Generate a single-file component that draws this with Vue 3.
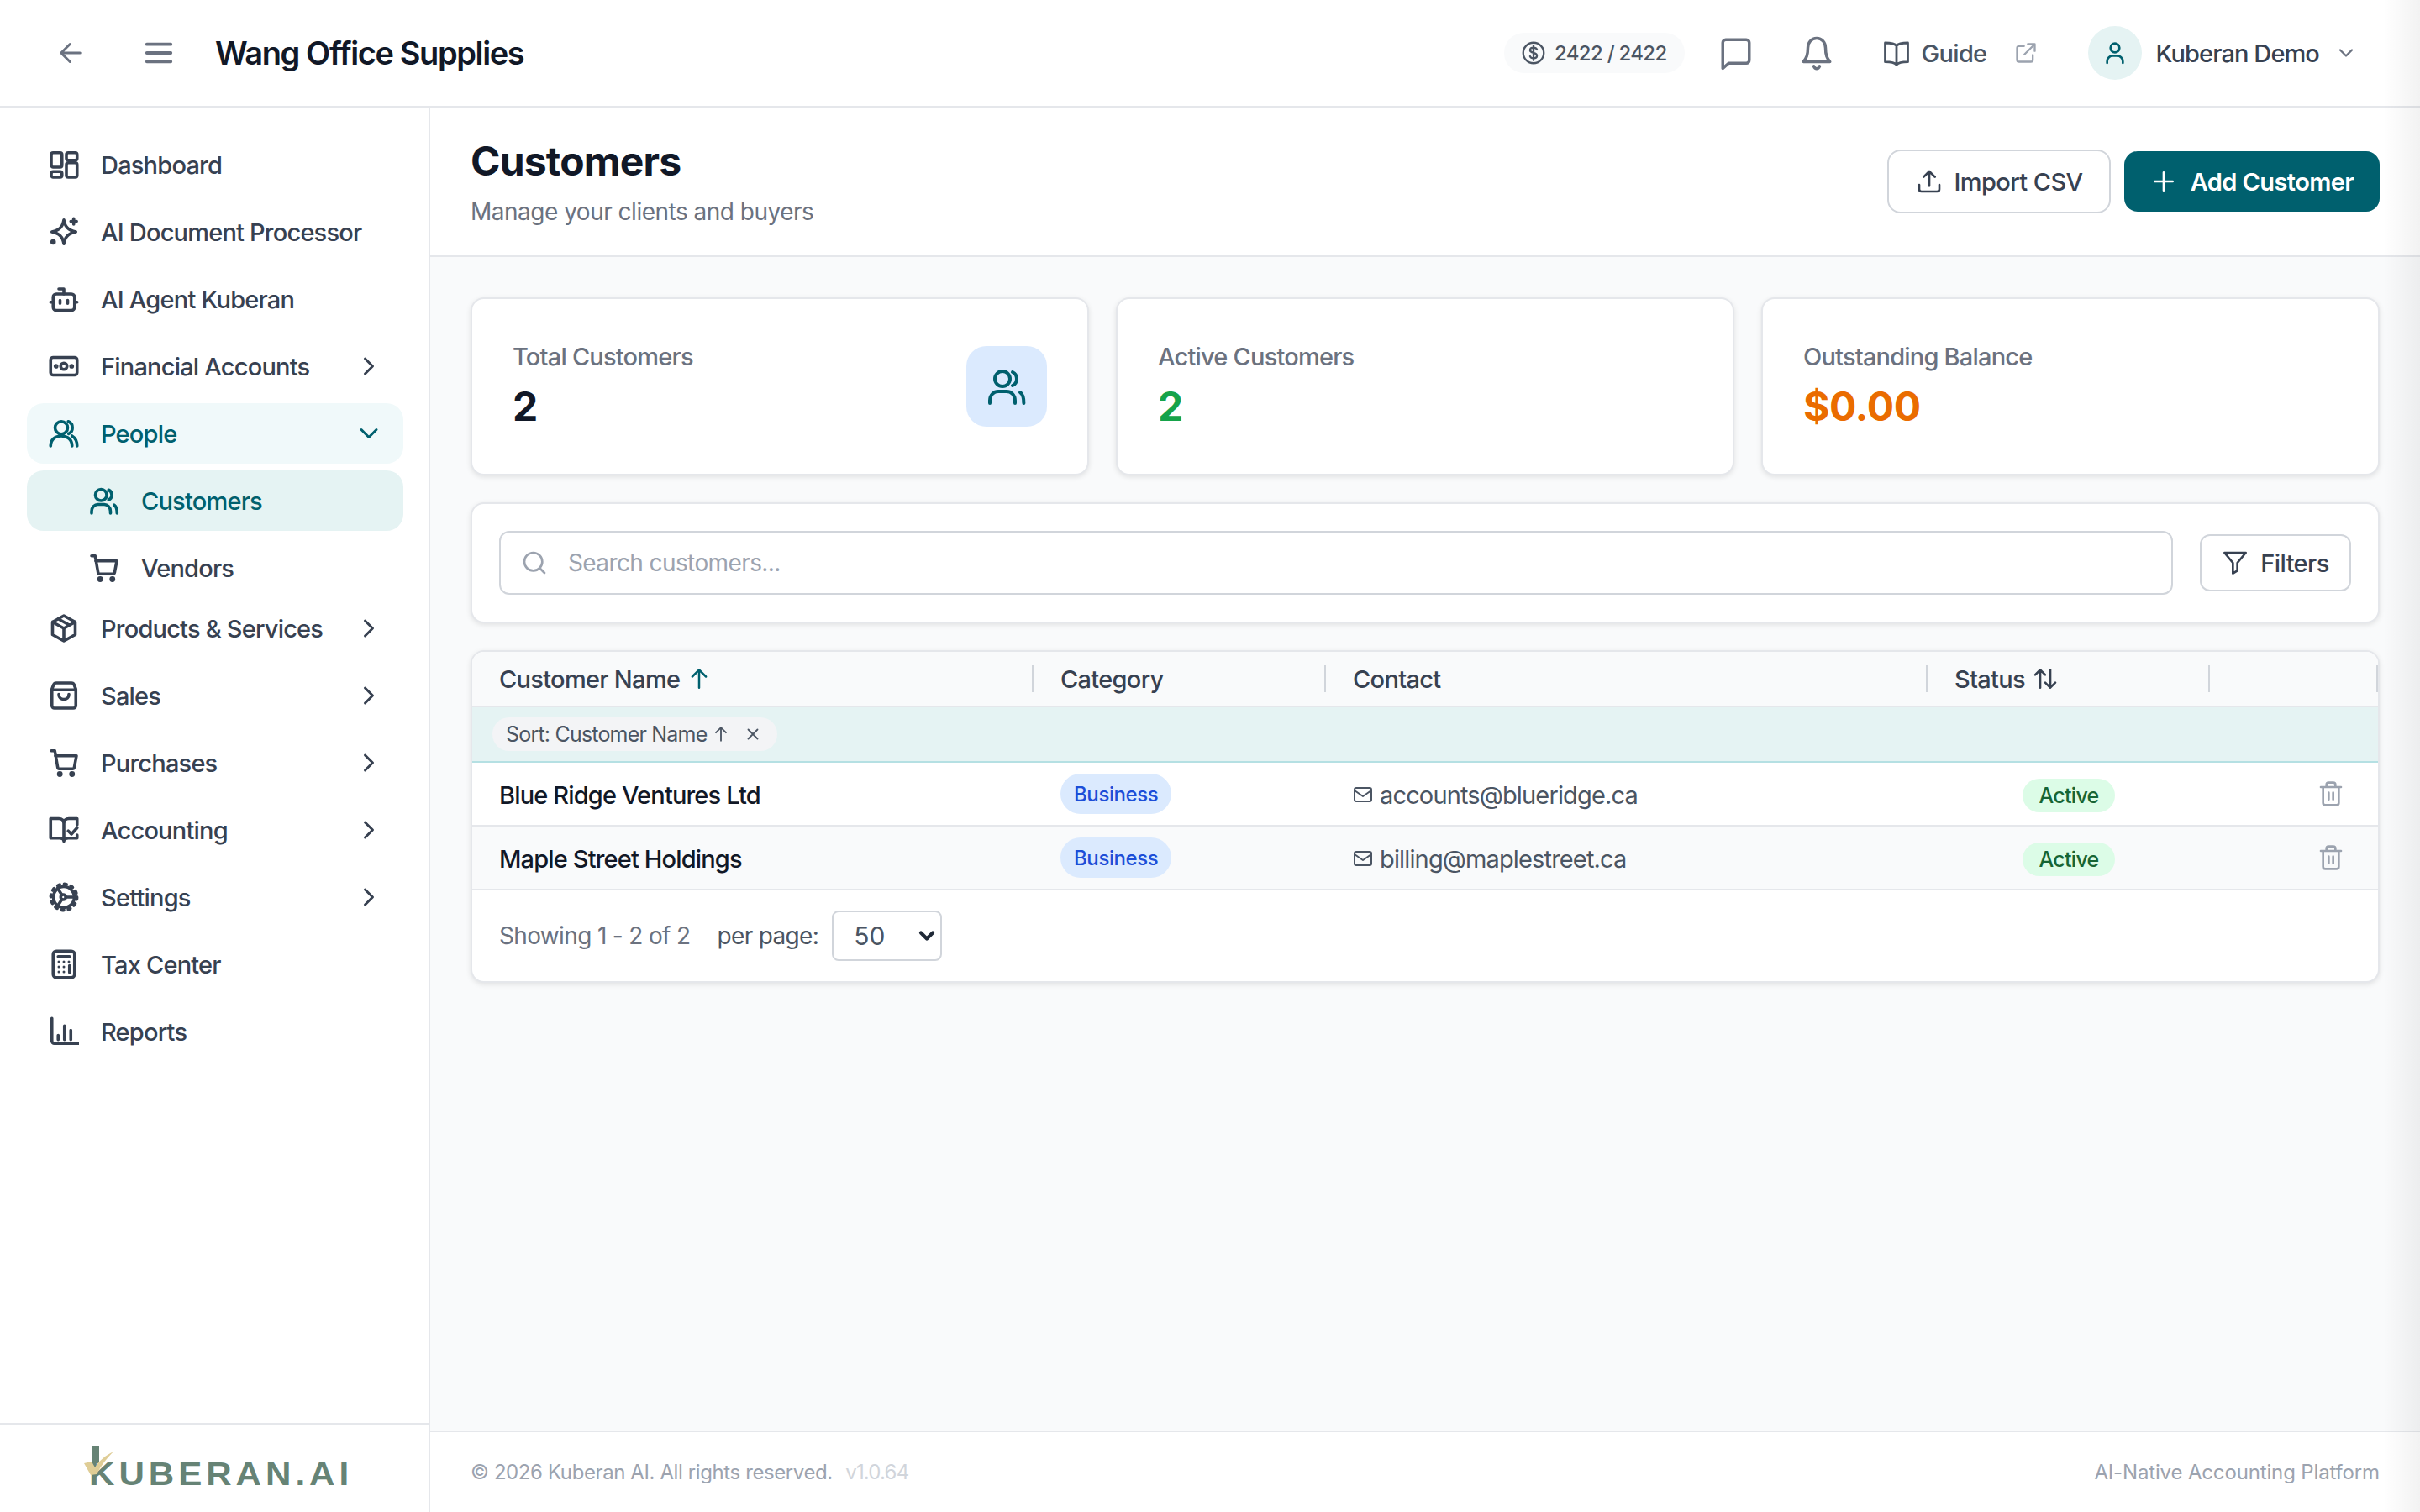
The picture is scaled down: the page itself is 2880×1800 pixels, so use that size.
<template>
  <div class="app">
    <!-- 顶栏 -->
    <header class="topbar">
      <svg class="ic back" viewBox="0 0 24 24" v-html="icons.back"></svg>
      <svg class="ic menu" viewBox="0 0 24 24" v-html="icons.menu"></svg>
      <div class="company">Wang Office Supplies</div>
      <div class="top-right">
        <div class="credits">
          <svg class="ic coin" viewBox="0 0 24 24" v-html="icons.coin"></svg>
          <span>2422 / 2422</span>
        </div>
        <svg class="ic chat" viewBox="0 0 24 24" v-html="icons.chat"></svg>
        <svg class="ic bell" viewBox="0 0 24 24" v-html="icons.bell"></svg>
        <svg class="ic guide-ic" viewBox="0 0 24 24" v-html="icons.book"></svg>
        <span class="guide">Guide</span>
        <svg class="ic ext" viewBox="0 0 24 24" v-html="icons.ext"></svg>
        <div class="avatar">
          <svg class="ic" viewBox="0 0 24 24" v-html="icons.user"></svg>
        </div>
        <span class="uname">Kuberan Demo</span>
        <svg class="ic uchev" viewBox="0 0 24 24" v-html="icons.down"></svg>
      </div>
    </header>

    <div class="body">
      <!-- 侧边栏 -->
      <aside class="sidebar">
        <nav class="nav">
          <div
            v-for="item in navItems"
            :key="item.label"
            class="nav-item"
            :class="[item.cls]"
          >
            <svg class="ic nav-ic" viewBox="0 0 24 24" v-html="icons[item.icon]"></svg>
            <span class="nav-label">{{ item.label }}</span>
            <svg v-if="item.arrow" class="ic nav-arrow" viewBox="0 0 24 24" v-html="icons[item.arrow]"></svg>
          </div>
        </nav>
        <div class="side-foot">
          <div class="logo">
            <span class="logo-text">KUBERAN.AI</span>
            <svg class="logo-mark" viewBox="0 0 40 40">
              <rect x="9" y="0" width="9" height="20" fill="#668375" />
              <path d="M0 20 L9 18 L13 25 C18 17 25 11 35 6 C27 14 20 23 15 33 L8 34 Z" fill="#dfcd96" />
            </svg>
          </div>
        </div>
      </aside>

      <main class="main">
        <section class="page-head">
          <div class="head-text">
            <h1>Customers</h1>
            <p>Manage your clients and buyers</p>
          </div>
          <div class="head-btns">
            <button class="btn btn-outline">
              <svg class="ic" viewBox="0 0 24 24" v-html="icons.upload"></svg>
              Import CSV
            </button>
            <button class="btn btn-primary">
              <svg class="ic" viewBox="0 0 24 24" v-html="icons.plus"></svg>
              Add Customer
            </button>
          </div>
        </section>

        <section class="content">
          <div class="stats">
            <div v-for="s in stats" :key="s.label" class="card stat">
              <div>
                <div class="stat-label">{{ s.label }}</div>
                <div class="stat-value" :class="s.cls">{{ s.value }}</div>
              </div>
              <div v-if="s.icon" class="stat-icon">
                <svg class="ic" viewBox="0 0 24 24" v-html="icons.customers"></svg>
              </div>
            </div>
          </div>

          <div class="card search-card">
            <div class="search">
              <svg class="ic" viewBox="0 0 24 24" v-html="icons.search"></svg>
              <span>Search customers...</span>
            </div>
            <button class="btn-filter">
              <svg class="ic" viewBox="0 0 24 24" v-html="icons.filter"></svg>
              Filters
            </button>
          </div>

          <div class="card table-card">
            <div class="t-row t-head">
              <div class="th">
                Customer Name
                <svg class="ic sort-on" viewBox="0 0 24 24" v-html="icons.up"></svg>
              </div>
              <div class="th">Category</div>
              <div class="th">Contact</div>
              <div class="th">
                Status
                <svg class="ic sort-off" viewBox="0 0 24 24" v-html="icons.updown"></svg>
              </div>
              <div class="th"></div>
            </div>
            <div class="sort-bar">
              <div class="chip">
                Sort: Customer Name
                <svg class="ic" viewBox="0 0 24 24" v-html="icons.up"></svg>
                <svg class="ic chip-x" viewBox="0 0 24 24" v-html="icons.close"></svg>
              </div>
            </div>
            <div v-for="c in customers" :key="c.name" class="t-row row">
              <div class="td name">{{ c.name }}</div>
              <div class="td"><span class="badge-cat">Business</span></div>
              <div class="td contact">
                <svg class="ic" viewBox="0 0 24 24" v-html="icons.mail"></svg>
                {{ c.email }}
              </div>
              <div class="td status"><span class="badge-ok">Active</span></div>
              <div class="td act">
                <svg class="ic" viewBox="0 0 24 24" v-html="icons.trash"></svg>
              </div>
            </div>
            <div class="pager">
              <span>Showing 1 - 2 of 2</span>
              <span class="per">per page:</span>
              <div class="select-wrap">
                <select class="per-select">
                  <option>50</option>
                  <option>100</option>
                </select>
                <svg class="ic select-arrow" viewBox="0 0 24 24" v-html="icons.down"></svg>
              </div>
            </div>
          </div>
        </section>

        <footer class="foot">
          <div>© 2026 Kuberan AI. All rights reserved. <span class="ver">v1.0.64</span></div>
          <div class="tagline">AI-Native Accounting Platform</div>
        </footer>
      </main>
    </div>
    <!-- 右侧抽屉的阴影 -->
    <div class="edge-shadow"></div>
  </div>
</template>

<script setup>
// 图标路径，24x24
const icons = {
  back: '<path d="M19.5 12H4.5M11.5 19l-7-7 7-7"/>',
  menu: '<path d="M3 5.5h18M3 12h18M3 18.5h18"/>',
  coin: '<circle cx="12" cy="12" r="10.5"/><path d="M15.5 8.5c-.5-1.2-1.8-2-3.5-2-2 0-3.5 1-3.5 2.7 0 3.6 7 1.9 7 5.6 0 1.7-1.5 2.7-3.5 2.7-1.7 0-3-.8-3.5-2M12 4.5v15"/>',
  chat: '<path d="M3 5c0-1.1.9-2 2-2h14c1.1 0 2 .9 2 2v12c0 1.1-.9 2-2 2H7l-4 3.5z"/>',
  bell: '<path d="M12 2c-3.600 0-6 3-6 6.500 0 5-1 7-3 9.500h18c-2-2.500-3-4.500-3-9.500C18 5 15.600 2 12 2zM10 21c.5 1.200 1.200 1.700 2 1.700s1.500-.5 2-1.700"/>',
  book: '<path d="M12 6C10.500 4 7 3.500 2.500 3.500v16c4.500 0 8 .5 9.500 2.500 1.500-2 5-2.500 9.500-2.500v-16C17 3.500 13.500 4 12 6zM12 6v16"/>',
  ext: '<path d="M19 14v5c0 1.100-.9 2-2 2H5c-1.100 0-2-.9-2-2V7c0-1.100.9-2 2-2h5M14 3h7v7M21 3 10.500 13.500"/>',
  user: '<circle cx="12" cy="7.500" r="4"/><path d="M5 21v-1.500c0-3 2.500-5 5-5h4c2.500 0 5 2 5 5V21"/>',
  down: '<path d="M6 9l6 6 6-6"/>',
  right: '<path d="M9 6l6 6-6 6"/>',
  up: '<path d="M12 20.500V3.500M5.500 10 12 3.500 18.500 10"/>',
  updown: '<path d="M7.500 20V4M3 8.500 7.500 4 12 8.500M16.500 4v16M12 15.500 16.500 20l4.500-4.500"/>',
  close: '<path d="M6 6l12 12M18 6 6 18"/>',
  plus: '<path d="M12 4v16M4 12h16"/>',
  upload: '<path d="M3 15v4c0 1.100.9 2 2 2h14c1.100 0 2-.9 2-2v-4M12 16V3M7 8l5-5 5 5"/>',
  search: '<circle cx="11" cy="11" r="8"/><path d="M21 21l-4.300-4.300"/>',
  filter: '<path d="M2.500 3h19l-7.500 9v7l-4 2.500V12z"/>',
  mail: '<rect x="2" y="4" width="20" height="16" rx="2"/><path d="M2 7l10 7 10-7"/>',
  trash: '<path d="M3 6h18M19 6v14c0 1.100-.9 2-2 2H7c-1.100 0-2-.9-2-2V6M8 6V4c0-1.100.9-2 2-2h4c1.100 0 2 .9 2 2v2M10 11v6M14 11v6"/>',
  dashboard: '<rect x="2" y="2.500" width="8.500" height="11.500" rx="1.500"/><rect x="14" y="2.500" width="8.500" height="6" rx="1.500"/><rect x="2" y="17.500" width="8.500" height="4.500" rx="1.500"/><rect x="14" y="10.500" width="8.500" height="11.500" rx="1.500"/>',
  sparkle: '<path d="M12 2.500c.9 5.500 3.400 8.300 9.500 9.500-6.100 1.200-8.600 4-9.500 9.500-.9-5.500-3.400-8.300-9.500-9.500 6.100-1.200 8.600-4 9.500-9.500z"/><path d="M19.800 1.500v4.500M17.500 3.700h4.600"/><circle cx="3.500" cy="20" r="1" fill="currentColor"/>',
  bot: '<rect x="3.500" y="8" width="17" height="13" rx="2.500"/><path d="M12 8V4H8M9 13v2.500M15 13v2.500M1.500 14.500h2M20.500 14.500h2"/>',
  money: '<rect x="1.500" y="5" width="21" height="14" rx="2"/><circle cx="12" cy="12" r="2.500"/><circle cx="5.800" cy="12" r=".7" fill="currentColor"/><circle cx="18.200" cy="12" r=".7" fill="currentColor"/>',
  people: '<circle cx="10" cy="7.500" r="5"/><path d="M1.500 22c0-5 3.500-8 8.500-8s8.500 3 8.500 8M15.500 2.500c2 .8 3.300 2.700 3.300 5s-1.300 4-3 4.700M18.500 14c2.500 1.500 4 4.500 4 8"/>',
  customers: '<circle cx="9.500" cy="7.500" r="4.500"/><path d="M15.500 3.500c1.500.7 2.500 2.300 2.500 4s-1 3.300-2.500 4M2 22v-1.500C2 17 4.500 15 7 15h5c2.500 0 5 2 5 5.500V22M20 15.500c1.500 1 2.200 3 2.200 6.500"/>',
  cart: '<path d="M2 2.500h2.800L7.200 16c.1.500.5.800 1 .8h11c.5 0 .9-.3 1-.8L22 6.500H5.200"/><circle cx="8.800" cy="21" r="1.100" fill="currentColor"/><circle cx="18.500" cy="21" r="1.100" fill="currentColor"/>',
  box: '<path d="M12 2l9 5v10l-9 5-9-5V7zM3 7l9 5 9-5M12 12v10M7.500 4.500l9 5"/>',
  bag: '<path d="M6 2h12c1 0 1.800.5 2.200 1.500L21.500 7v13c0 1.100-.9 2-2 2h-15c-1.100 0-2-.9-2-2V7l1.300-3.500C4.200 2.500 5 2 6 2zM2.500 7.500h19M8 11c0 2.500 1.800 4 4 4s4-1.500 4-4"/>',
  ledger: '<path d="M12 21c0-1.500-1.500-2.500-3.500-2.500H1.500V3H8c2.500 0 4 1.500 4 4v14zM12 7c0-2.500 1.500-4 4-4h6.500v5M12 21c0-1.500 1.500-2.500 3.500-2.500h7V16M15.500 12.800l2.500 2.500 4.500-5"/>',
  gear: '<circle cx="12" cy="12" r="8.300"/><circle cx="12" cy="12" r="10.300" stroke-dasharray="1.700 3.700" stroke-width="2.600"/><circle cx="11.500" cy="12" r="2"/><path d="M13.500 12h7M10.500 10.300 7 4.800M10.500 13.700 7 19.200"/>',
  calc: '<rect x="3.500" y="1.500" width="17" height="21" rx="2.500"/><path d="M7.500 5.800h9M16.500 13v5.500"/><g fill="currentColor" stroke="none"><circle cx="8" cy="10" r="1"/><circle cx="12" cy="10" r="1"/><circle cx="16" cy="10" r="1"/><circle cx="8" cy="14" r="1"/><circle cx="12" cy="14" r="1"/><circle cx="8" cy="18" r="1"/><circle cx="12" cy="18" r="1"/></g>',
  chart: '<path d="M2.500 1.500v18c0 1.100.9 2 2 2h19M7.500 15v3.500M12.500 7.500v11M17.500 11v7.500"/>'
}

// 侧边栏菜单
const navItems = [
  { label: 'Dashboard', icon: 'dashboard' },
  { label: 'AI Document Processor', icon: 'sparkle' },
  { label: 'AI Agent Kuberan', icon: 'bot' },
  { label: 'Financial Accounts', icon: 'money', arrow: 'right' },
  { label: 'People', icon: 'people', arrow: 'down', cls: 'open' },
  { label: 'Customers', icon: 'customers', cls: 'sub active' },
  { label: 'Vendors', icon: 'cart', cls: 'sub' },
  { label: 'Products & Services', icon: 'box', arrow: 'right', cls: 'after-sub' },
  { label: 'Sales', icon: 'bag', arrow: 'right' },
  { label: 'Purchases', icon: 'cart', arrow: 'right' },
  { label: 'Accounting', icon: 'ledger', arrow: 'right' },
  { label: 'Settings', icon: 'gear', arrow: 'right' },
  { label: 'Tax Center', icon: 'calc' },
  { label: 'Reports', icon: 'chart' }
]

const stats = [
  { label: 'Total Customers', value: '2', icon: true },
  { label: 'Active Customers', value: '2', cls: 'green' },
  { label: 'Outstanding Balance', value: '$0.00', cls: 'orange' }
]

const customers = [
  { name: 'Blue Ridge Ventures Ltd', email: 'accounts@blueridge.ca' },
  { name: 'Maple Street Holdings', email: 'billing@maplestreet.ca' }
]
</script>

<style>
html,
body {
  margin: 0;
  background: #fff;
  overflow: hidden;
}
</style>

<style scoped>
.app {
  position: relative;
  width: 2880px;
  height: 1800px;
  display: flex;
  flex-direction: column;
  font-family: Inter, "Liberation Sans", sans-serif;
  color: #374151;
  overflow: hidden;
  letter-spacing: -0.7px;
}

.ic {
  fill: none;
  stroke: currentColor;
  stroke-width: 2;
  stroke-linecap: round;
  stroke-linejoin: round;
  flex: none;
}

/* 顶栏 */
.topbar {
  height: 126px;
  flex: none;
  border-bottom: 2px solid #e5e7eb;
  display: flex;
  align-items: center;
  padding: 0 74px 0 66px;
  background: #fff;
}

.back,
.menu {
  width: 36px;
  height: 36px;
  color: #6b7280;
}

.menu {
  margin-left: 68px;
  width: 38px;
  height: 38px;
  stroke-width: 2.4;
}

.company {
  margin-left: 48px;
  font-size: 38px;
  font-weight: 600;
  color: #111827;
  letter-spacing: -1.4px;
}

.top-right {
  margin-left: auto;
  display: flex;
  align-items: center;
}

.credits {
  display: flex;
  align-items: center;
  gap: 11px;
  height: 48px;
  padding: 0 21px;
  border-radius: 24px;
  background: #f9fafb;
  font-size: 24px;
  font-weight: 500;
  color: #4b5563;
}

.coin {
  width: 28px;
  height: 28px;
}

.chat,
.bell {
  width: 42px;
  height: 42px;
  color: #6b7280;
}

.chat {
  margin-left: 40px;
}

.bell {
  margin-left: 54px;
}

.guide-ic {
  width: 34px;
  height: 34px;
  margin-left: 57px;
  color: #4b5563;
}

.guide {
  margin-left: 13px;
  font-size: 29px;
  font-weight: 500;
  color: #4b5563;
}

.ext {
  width: 28px;
  height: 28px;
  margin-left: 33px;
  color: #9ca3af;
}

.avatar {
  width: 64px;
  height: 64px;
  margin-left: 60px;
  border-radius: 50%;
  background: #e5f3f3;
  color: #00606e;
  display: flex;
  align-items: center;
  justify-content: center;
}

.avatar .ic {
  width: 32px;
  height: 32px;
}

.uname {
  margin-left: 16px;
  font-size: 29px;
  font-weight: 500;
  color: #374151;
  letter-spacing: -0.9px;
}

.uchev {
  width: 28px;
  height: 28px;
  margin-left: 18px;
  color: #6b7280;
}

.body {
  flex: 1;
  display: flex;
  min-height: 0;
}

/* 侧边栏 */
.sidebar {
  width: 510px;
  flex: none;
  border-right: 2px solid #e5e7eb;
  display: flex;
  flex-direction: column;
  background: #fff;
}

.nav {
  flex: 1;
  padding: 32px 30px 0 32px;
}

.nav-item {
  height: 72px;
  margin-bottom: 8px;
  padding: 0 23px 0 26px;
  border-radius: 20px;
  display: flex;
  align-items: center;
  font-size: 29px;
  font-weight: 500;
  color: #374151;
  letter-spacing: -0.8px;
}

.nav-ic {
  width: 36px;
  height: 36px;
  stroke-width: 2.4;
}

.nav-label {
  margin-left: 26px;
}

.nav-arrow {
  width: 36px;
  height: 36px;
  margin-left: auto;
}

.nav-item.open {
  background: #f0f9fa;
  color: #00606e;
}

.nav-item.sub {
  padding-left: 74px;
}

.nav-item.active {
  background: #e5f3f3;
  color: #00606e;
}

.nav-item.after-sub {
  margin-top: -8px;
}

.side-foot {
  height: 104px;
  flex: none;
  border-top: 2px solid #e5e7eb;
  display: flex;
  align-items: center;
  padding-left: 106px;
}

.logo {
  position: relative;
  margin-top: 12px;
}

.logo-text {
  display: block;
  font-family: "Liberation Sans", sans-serif;
  font-size: 39px;
  line-height: 1;
  font-weight: 700;
  color: #668375;
  letter-spacing: 4.6px;
  transform: scaleX(1.08);
  transform-origin: left center;
}

.logo-mark {
  position: absolute;
  left: -6px;
  top: -13px;
  width: 40px;
  height: 40px;
}

/* 主内容 */
.main {
  flex: 1;
  min-width: 0;
  display: flex;
  flex-direction: column;
  background: #f9fafb;
}

.page-head {
  height: 176px;
  flex: none;
  background: #fff;
  border-bottom: 2px solid #e5e7eb;
  padding: 0 48px;
  display: flex;
  align-items: center;
  justify-content: space-between;
}

.head-text {
  margin-top: 2px;
}

h1 {
  margin: 0;
  font-size: 48px;
  line-height: 60px;
  font-weight: 700;
  color: #111827;
  letter-spacing: -0.8px;
}

.page-head p {
  margin: 10px 0 0;
  font-size: 28px;
  line-height: 40px;
  color: #6b7280;
  letter-spacing: -0.5px;
}

.head-btns {
  display: flex;
  align-items: center;
  gap: 16px;
}

.btn {
  height: 72px;
  border-radius: 16px;
  border: none;
  display: flex;
  align-items: center;
  font: inherit;
  font-size: 29px;
  font-weight: 500;
  letter-spacing: -0.6px;
  cursor: pointer;
}

.btn .ic {
  width: 32px;
  height: 32px;
}

.btn-outline {
  height: 76px;
  width: 266px;
  box-sizing: border-box;
  justify-content: center;
  gap: 14px;
  background: #fff;
  border: 2px solid #d1d5db;
  color: #374151;
}

.btn-primary {
  width: 304px;
  justify-content: center;
  gap: 16px;
  background: #00606e;
  color: #fff;
  font-weight: 600;
}

.content {
  flex: 1;
  padding: 48px;
  display: flex;
  flex-direction: column;
  gap: 32px;
}

.card {
  background: #fff;
  border: 2px solid #e5e7eb;
  border-radius: 16px;
  box-shadow: 0 2px 6px rgba(0, 0, 0, 0.1);
  box-sizing: border-box;
}

.stats {
  display: grid;
  grid-template-columns: repeat(3, 1fr);
  gap: 32px;
}

.stat {
  height: 212px;
  padding: 0 48px 2px;
  display: flex;
  align-items: center;
  justify-content: space-between;
}

.stat-icon {
  margin-top: 2px;
}

.stat-label {
  font-size: 29px;
  line-height: 40px;
  font-weight: 500;
  color: #6b7280;
  letter-spacing: -0.8px;
}

.stat-value {
  margin-top: 9px;
  font-size: 48px;
  line-height: 60px;
  font-weight: 700;
  color: #111827;
  letter-spacing: -0.4px;
}

.stat-value.green {
  color: #16a34a;
}

.stat-value.orange {
  color: #ea6c00;
}

.stat-icon {
  width: 96px;
  height: 96px;
  border-radius: 24px;
  background: #dbeafe;
  color: #00606e;
  display: flex;
  align-items: center;
  justify-content: center;
}

.stat-icon .ic {
  width: 48px;
  height: 48px;
}

.search-card {
  height: 144px;
  padding: 0 32px;
  display: flex;
  align-items: center;
  gap: 32px;
}

.search {
  flex: 1;
  height: 76px;
  box-sizing: border-box;
  border: 2px solid #d1d5db;
  border-radius: 12px;
  display: flex;
  align-items: center;
  padding: 0 24px;
  gap: 24px;
  font-size: 28px;
  color: #9ca3af;
  letter-spacing: -0.6px;
}

.search .ic {
  width: 32px;
  height: 32px;
  color: #9ca3af;
}

.btn-filter {
  width: 180px;
  height: 68px;
  flex: none;
  box-sizing: border-box;
  border: 2px solid #d1d5db;
  border-radius: 12px;
  background: #fff;
  display: flex;
  align-items: center;
  justify-content: center;
  gap: 14px;
  font: inherit;
  font-size: 29px;
  font-weight: 500;
  letter-spacing: -0.6px;
  color: #374151;
}

.btn-filter .ic {
  width: 32px;
  height: 32px;
}

/* 表格 */
.table-card {
  overflow: hidden;
}

.t-row {
  display: grid;
  grid-template-columns: 668px 348px 716px 336px 1fr;
}

.t-head {
  height: 64px;
  background: #f9fafb;
  border-bottom: 2px solid #e5e7eb;
}

.th {
  display: flex;
  align-items: center;
  gap: 8px;
  padding-left: 32px;
  font-size: 29px;
  font-weight: 500;
  color: #374151;
  position: relative;
}

.th::after {
  content: "";
  position: absolute;
  right: 0;
  top: 16px;
  width: 2px;
  height: 32px;
  background: #d1d5db;
}

.sort-on {
  width: 30px;
  height: 30px;
  color: #00606e;
}

.sort-off {
  width: 32px;
  height: 32px;
  color: #374151;
}

.sort-bar {
  height: 64px;
  background: #e5f3f3;
  border-bottom: 2px solid #b5e0e3;
  display: flex;
  align-items: center;
  padding-left: 24px;
}

.chip {
  height: 40px;
  padding: 0 18px 0 16px;
  border-radius: 20px;
  background: #f3f4f6;
  display: flex;
  align-items: center;
  gap: 6px;
  font-size: 25px;
  color: #4b5563;
  letter-spacing: -0.8px;
}

.chip .ic {
  width: 22px;
  height: 22px;
}

.chip-x {
  margin-left: 10px;
}

.row {
  height: 76px;
  box-sizing: border-box;
  border-bottom: 2px solid #e5e7eb;
  background: #fff;
}

.row:nth-of-type(even) {
  background: #f9fafb;
}

.td {
  display: flex;
  align-items: center;
  padding-left: 32px;
  font-size: 29px;
}

.name {
  padding-top: 2px;
  font-weight: 500;
  color: #111827;
  letter-spacing: -0.85px;
}

.badge-cat {
  height: 48px;
  padding: 0 16px;
  border-radius: 24px;
  background: #dbeafe;
  color: #1d4ed8;
  display: flex;
  align-items: center;
  font-size: 24px;
  font-weight: 500;
  letter-spacing: -0.4px;
}

.contact {
  padding-top: 2px;
  gap: 8px;
  color: #4b5563;
  letter-spacing: -0.85px;
}

.contact .ic {
  width: 24px;
  height: 24px;
}

.status {
  justify-content: center;
  padding: 0;
}

.badge-ok {
  height: 40px;
  margin-top: 3px;
  padding: 0 19px;
  border-radius: 20px;
  background: #dcfce7;
  color: #166534;
  display: flex;
  align-items: center;
  font-size: 25px;
  font-weight: 500;
}

.act {
  justify-content: flex-end;
  padding-right: 40px;
  color: #9ca3af;
}

.act .ic {
  width: 32px;
  height: 32px;
}

.pager {
  height: 108px;
  padding-left: 32px;
  display: flex;
  align-items: center;
  font-size: 28px;
  color: #6b7280;
  letter-spacing: -0.65px;
}

.per {
  margin-left: 32px;
  color: #4b5563;
}

.select-wrap {
  position: relative;
  margin-left: 16px;
}

.per-select {
  display: block;
  width: 131px;
  height: 60px;
  box-sizing: border-box;
  appearance: none;
  border: 2px solid #d1d5db;
  border-radius: 8px;
  background: #fff;
  padding: 0 8px 0 24px;
  font: inherit;
  font-size: 30px;
  color: #4b5563;
}

.select-arrow {
  position: absolute;
  right: 4px;
  top: 16px;
  width: 28px;
  height: 28px;
  stroke-width: 3.6;
  color: #1f2937;
  pointer-events: none;
}

.foot {
  height: 95px;
  flex: none;
  background: #fff;
  border-top: 2px solid #e5e7eb;
  padding: 0 48px;
  display: flex;
  align-items: center;
  justify-content: space-between;
  font-size: 24px;
  color: #9ca3af;
  letter-spacing: -0.4px;
}

.tagline {
  letter-spacing: -0.15px;
}

.ver {
  margin-left: 9px;
  color: #d1d5db;
  letter-spacing: -0.8px;
}

.edge-shadow {
  position: absolute;
  top: 0;
  right: 0;
  bottom: 0;
  width: 44px;
  background: linear-gradient(to right, rgba(0, 0, 0, 0), rgba(0, 0, 0, 0.05));
  pointer-events: none;
}
</style>
